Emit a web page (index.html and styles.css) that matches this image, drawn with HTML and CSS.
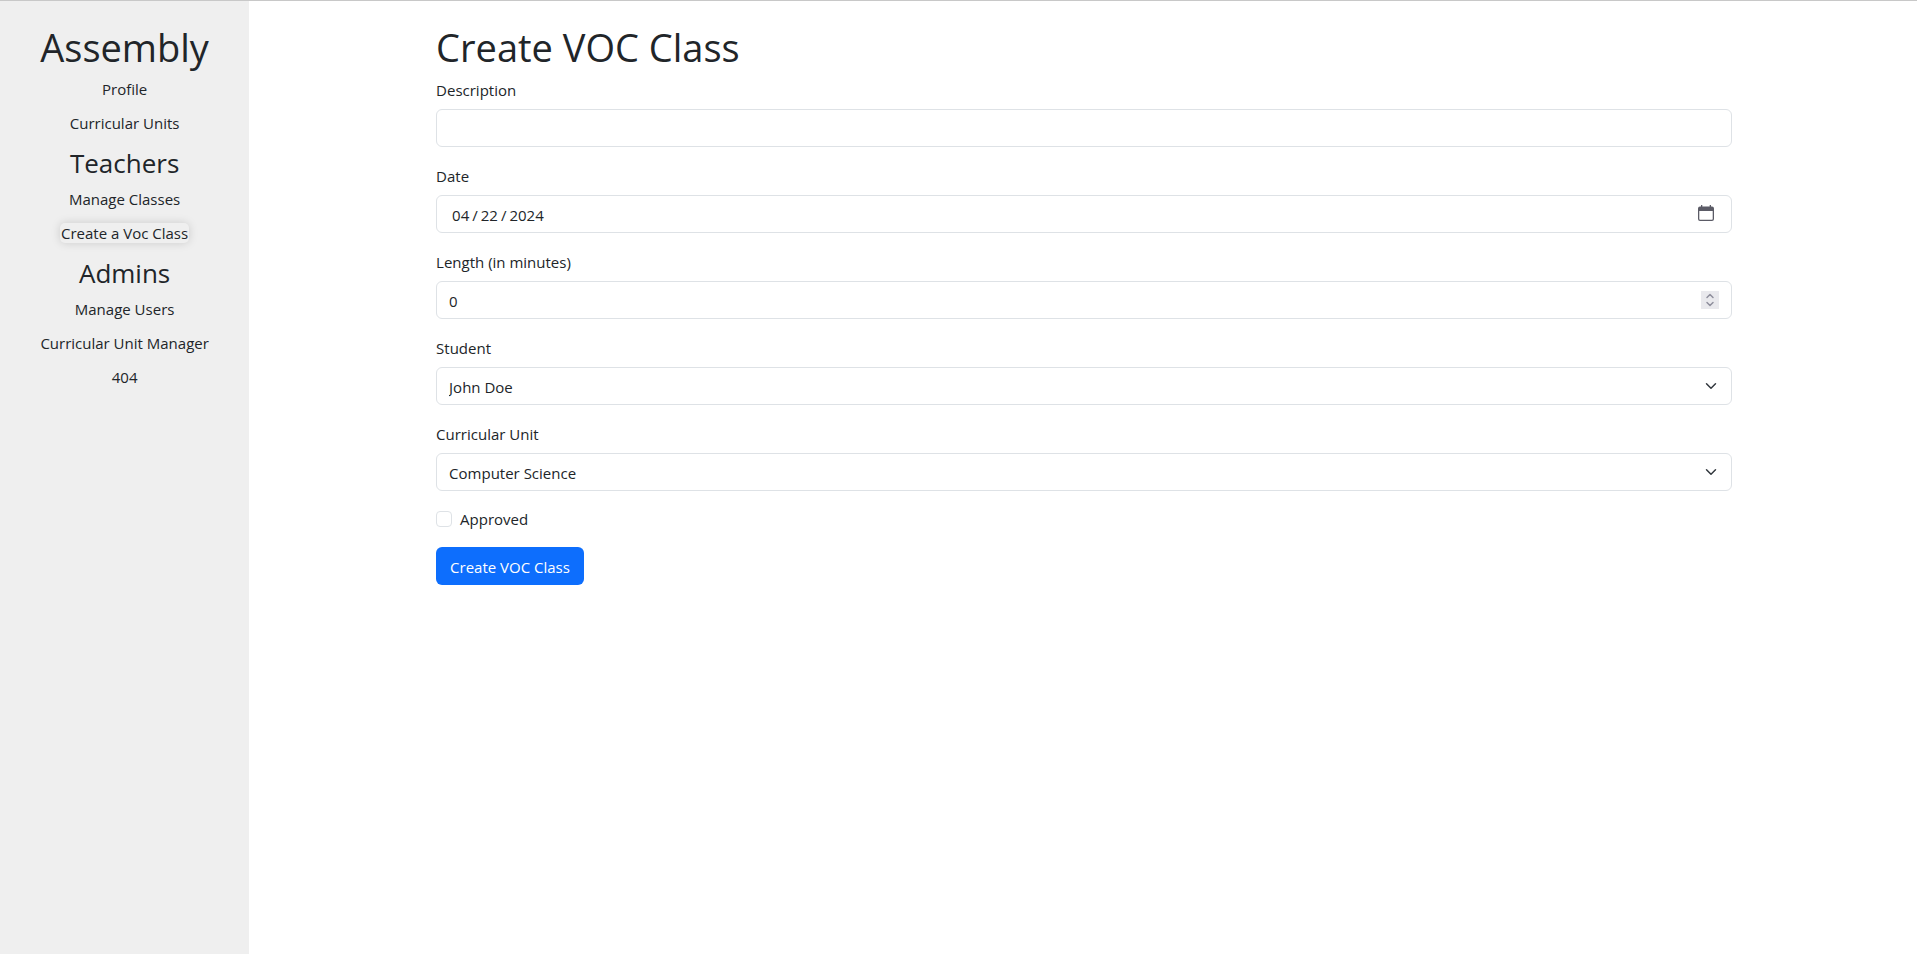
FILE: index.html
```html
<!DOCTYPE html>
<html lang="en-US">
<head>
  <meta charset="utf-8">
  <meta name="viewport" content="width=device-width, initial-scale=1">
  <title>Create VOC Class</title>
  <link rel="stylesheet" href="styles.css">
</head>
<body>
  <div class="app">
    <nav class="sidebar">
      <h1 class="title">Assembly</h1>
      <ul class="nav-list">
        <li><a class="nav-link" href="#profile">Profile</a></li>
        <li><a class="nav-link" href="#units">Curricular Units</a></li>
      </ul>
      <h3 class="section-title">Teachers</h3>
      <ul class="nav-list">
        <li><a class="nav-link" href="#classes">Manage Classes</a></li>
        <li><a class="nav-link active" href="#create">Create a Voc Class</a></li>
      </ul>
      <h3 class="section-title">Admins</h3>
      <ul class="nav-list">
        <li><a class="nav-link" href="#users">Manage Users</a></li>
        <li><a class="nav-link" href="#unit-manager">Curricular Unit Manager</a></li>
        <li><a class="nav-link" href="#404">404</a></li>
      </ul>
    </nav>
    <main class="content">
      <div class="container">
        <h1 class="title">Create VOC Class</h1>
        <form class="form">
          <div class="field">
            <label for="description">Description</label>
            <input class="control" id="description" type="text">
          </div>
          <div class="field">
            <label for="date">Date</label>
            <input class="control" id="date" type="date" value="2024-04-22">
          </div>
          <div class="field">
            <label for="length">Length (in minutes)</label>
            <input class="control" id="length" type="number" value="0">
          </div>
          <div class="field">
            <label for="student">Student</label>
            <select class="control" id="student"><option>John Doe</option></select>
          </div>
          <div class="field">
            <label for="unit">Curricular Unit</label>
            <select class="control" id="unit"><option>Computer Science</option></select>
          </div>
          <div class="check">
            <input class="check-input" id="approved" type="checkbox">
            <label for="approved">Approved</label>
          </div>
          <button class="button" type="submit">Create VOC Class</button>
        </form>
      </div>
    </main>
  </div>
</body>
</html>
```
FILE: styles.css
```css
*, *::before, *::after {
  box-sizing: border-box;
}

body {
  margin: 0;
  font-family: "Segoe UI", "Open Sans", "Noto Sans", sans-serif;
  font-size: 15px;
  line-height: 24px;
  color: #212529;
  background: #fff;
}

.app {
  display: flex;
  min-height: 100vh;
  border-top: 1px solid #c8c8c8;
}

.sidebar {
  flex: 0 0 13%;
  padding-top: 22px;
  text-align: center;
  background: #efefef;
}

.content {
  flex: 1;
  padding: 22px 0 0 2px;
}

.container {
  max-width: 1320px;
  margin: 0 auto;
  padding: 0 12px;
}

.title,
.section-title {
  margin: 0 0 6px;
  font-weight: 400;
}

.title {
  font-size: 38px;
  line-height: 48px;
}

.section-title {
  font-size: 26px;
  line-height: 36px;
}

.nav-list {
  display: grid;
  gap: 10px;
  margin: 0 0 10px;
  padding: 0;
  list-style: none;
}

.nav-link {
  border-radius: 5px;
  color: inherit;
  text-decoration: none;
}

.nav-link.active {
  padding: 0 1px;
  box-shadow: 0 0 10px rgba(0, 0, 0, 0.15);
}

.form {
  display: grid;
  gap: 16px;
  justify-items: start;
}

.field {
  display: grid;
  gap: 6px;
  width: 100%;
  line-height: 26px;
}

.control {
  width: 100%;
  height: 38px;
  margin: 0;
  padding: 7px 12px 5px;
  border: 1px solid #dee2e6;
  border-radius: 6px;
  font: inherit;
  line-height: 24px;
  color: inherit;
  background-color: #fff;
  appearance: none;
}

select.control {
  background-image: url("data:image/svg+xml,%3Csvg xmlns='http://www.w3.org/2000/svg' viewBox='0 0 16 16'%3E%3Cpath fill='none' stroke='%23343a40' stroke-linecap='round' stroke-linejoin='round' stroke-width='2' d='m2 5 6 6 6-6'/%3E%3C/svg%3E");
  background-repeat: no-repeat;
  background-position: right 12px center;
  background-size: 16px 12px;
}

.control::-webkit-datetime-edit {
  padding: 0 2px;
}

.control::-webkit-datetime-edit-fields-wrapper {
  padding: 0;
}

.control::-webkit-datetime-edit-text {
  padding: 0 2px;
}

.control::-webkit-calendar-picker-indicator {
  width: 16px;
  height: 16px;
  margin: 0 5px 4px 0;
  padding: 0;
  background: url("data:image/svg+xml,%3Csvg xmlns='http://www.w3.org/2000/svg' viewBox='0 0 16 16'%3E%3Cpath fill='%235b5b66' fill-rule='evenodd' d='M3 0h1.3v1.5h7.4V0H13v1.5h1a2 2 0 0 1 2 2V14a2 2 0 0 1-2 2H2a2 2 0 0 1-2-2V3.500a2 2 0 0 1 2-2h1zM1.300 6v8q0 .7.7.7h12q.7 0 .7-.7V6z'/%3E%3C/svg%3E") center / 16px 16px no-repeat;
}

.control::-webkit-inner-spin-button {
  width: 18px;
  height: 18px;
  margin: 0 0 2px;
  opacity: 1;
  appearance: none;
  background: #e9e9ed url("data:image/svg+xml,%3Csvg xmlns='http://www.w3.org/2000/svg' viewBox='0 0 18 18'%3E%3Cpath fill='none' stroke='%238f8f9d' stroke-width='1.500' stroke-linecap='round' stroke-linejoin='round' d='m6 6.500 3-3 3 3M6 11.500l3 3 3-3'/%3E%3C/svg%3E") center / 18px 18px no-repeat;
}

.check {
  display: flex;
  gap: 8px;
}

.check-input {
  width: 16px;
  height: 16px;
  margin: 4px 0 0;
  border: 1px solid #dee2e6;
  border-radius: 4px;
  background: #fff;
  appearance: none;
}

.check-input:checked {
  border-color: #0d6efd;
  background: #0d6efd;
}

.button {
  height: 38px;
  padding: 7px 14px 5px;
  border: 0;
  border-radius: 6px;
  font: inherit;
  color: #fff;
  background: #0d6efd;
}
```
